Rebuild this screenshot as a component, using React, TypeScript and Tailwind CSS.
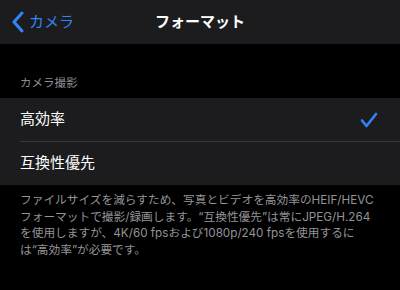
const jp = "[font-family:'Inter','Noto_Sans_CJK_JP',sans-serif]";

function BackChevron() {
    return (
        <svg width="14" height="22" viewBox="0 0 14 22" fill="none">
            <path
                d="M11 2 L3 11 L11 20"
                stroke="#3384f6"
                strokeWidth="3"
                strokeLinecap="round"
                strokeLinejoin="round"
            />
        </svg>
    );
}

function Check() {
    return (
        <svg width="18" height="16" viewBox="0 0 18 16" fill="none">
            <path
                d="M2 8.5 L6.5 14 L16 2"
                stroke="#3384f6"
                strokeWidth="2.6"
                strokeLinecap="round"
                strokeLinejoin="round"
            />
        </svg>
    );
}

type Option = {
    label: string;
    selected: boolean;
};

const options: Option[] = [
    { label: "高効率", selected: true },
    { label: "互換性優先", selected: false },
];

export default function App() {
    return (
        <div className={`h-[290px] w-[400px] overflow-hidden bg-black ${jp}`}>
            <div className="grid h-[44px] grid-cols-[1fr_auto_1fr] items-center bg-[#1c1c1e]">
                <div className="flex items-center gap-[4px] pl-[11px] text-[15px] text-[#3384f6]">
                    <BackChevron />
                    <span>カメラ</span>
                </div>
                <div className="text-[15px] font-bold text-white">フォーマット</div>
                <div />
            </div>
            <div className="px-5 pb-[7px] pt-[31px] text-[11.5px] leading-[16px] text-[#8d8d93]">
                カメラ撮影
            </div>
            <div className="bg-[#1c1c1e]">
                {options.map((option, i) => (
                    <div key={option.label}>
                        {i > 0 ? <div className="ml-5 h-px bg-[#38383a]" /> : null}
                        <div className="flex h-[43px] items-center justify-between pl-5 pr-[22px] text-[15px] text-white">
                            <span>{option.label}</span>
                            {option.selected ? <Check /> : null}
                        </div>
                    </div>
                ))}
            </div>
            <p className="px-5 pt-[7px] text-[11.7px] leading-[16.7px] text-[#939398]">
                ファイルサイズを減らすため、写真とビデオを高効率のHEIF/HEVC
                <br />
                フォーマットで撮影/録画します。“互換性優先”は常にJPEG/H.264
                <br />
                を使用しますが、4K/60 fpsおよび1080p/240 fpsを使用するに
                <br />
                は“高効率”が必要です。
            </p>
        </div>
    );
}
